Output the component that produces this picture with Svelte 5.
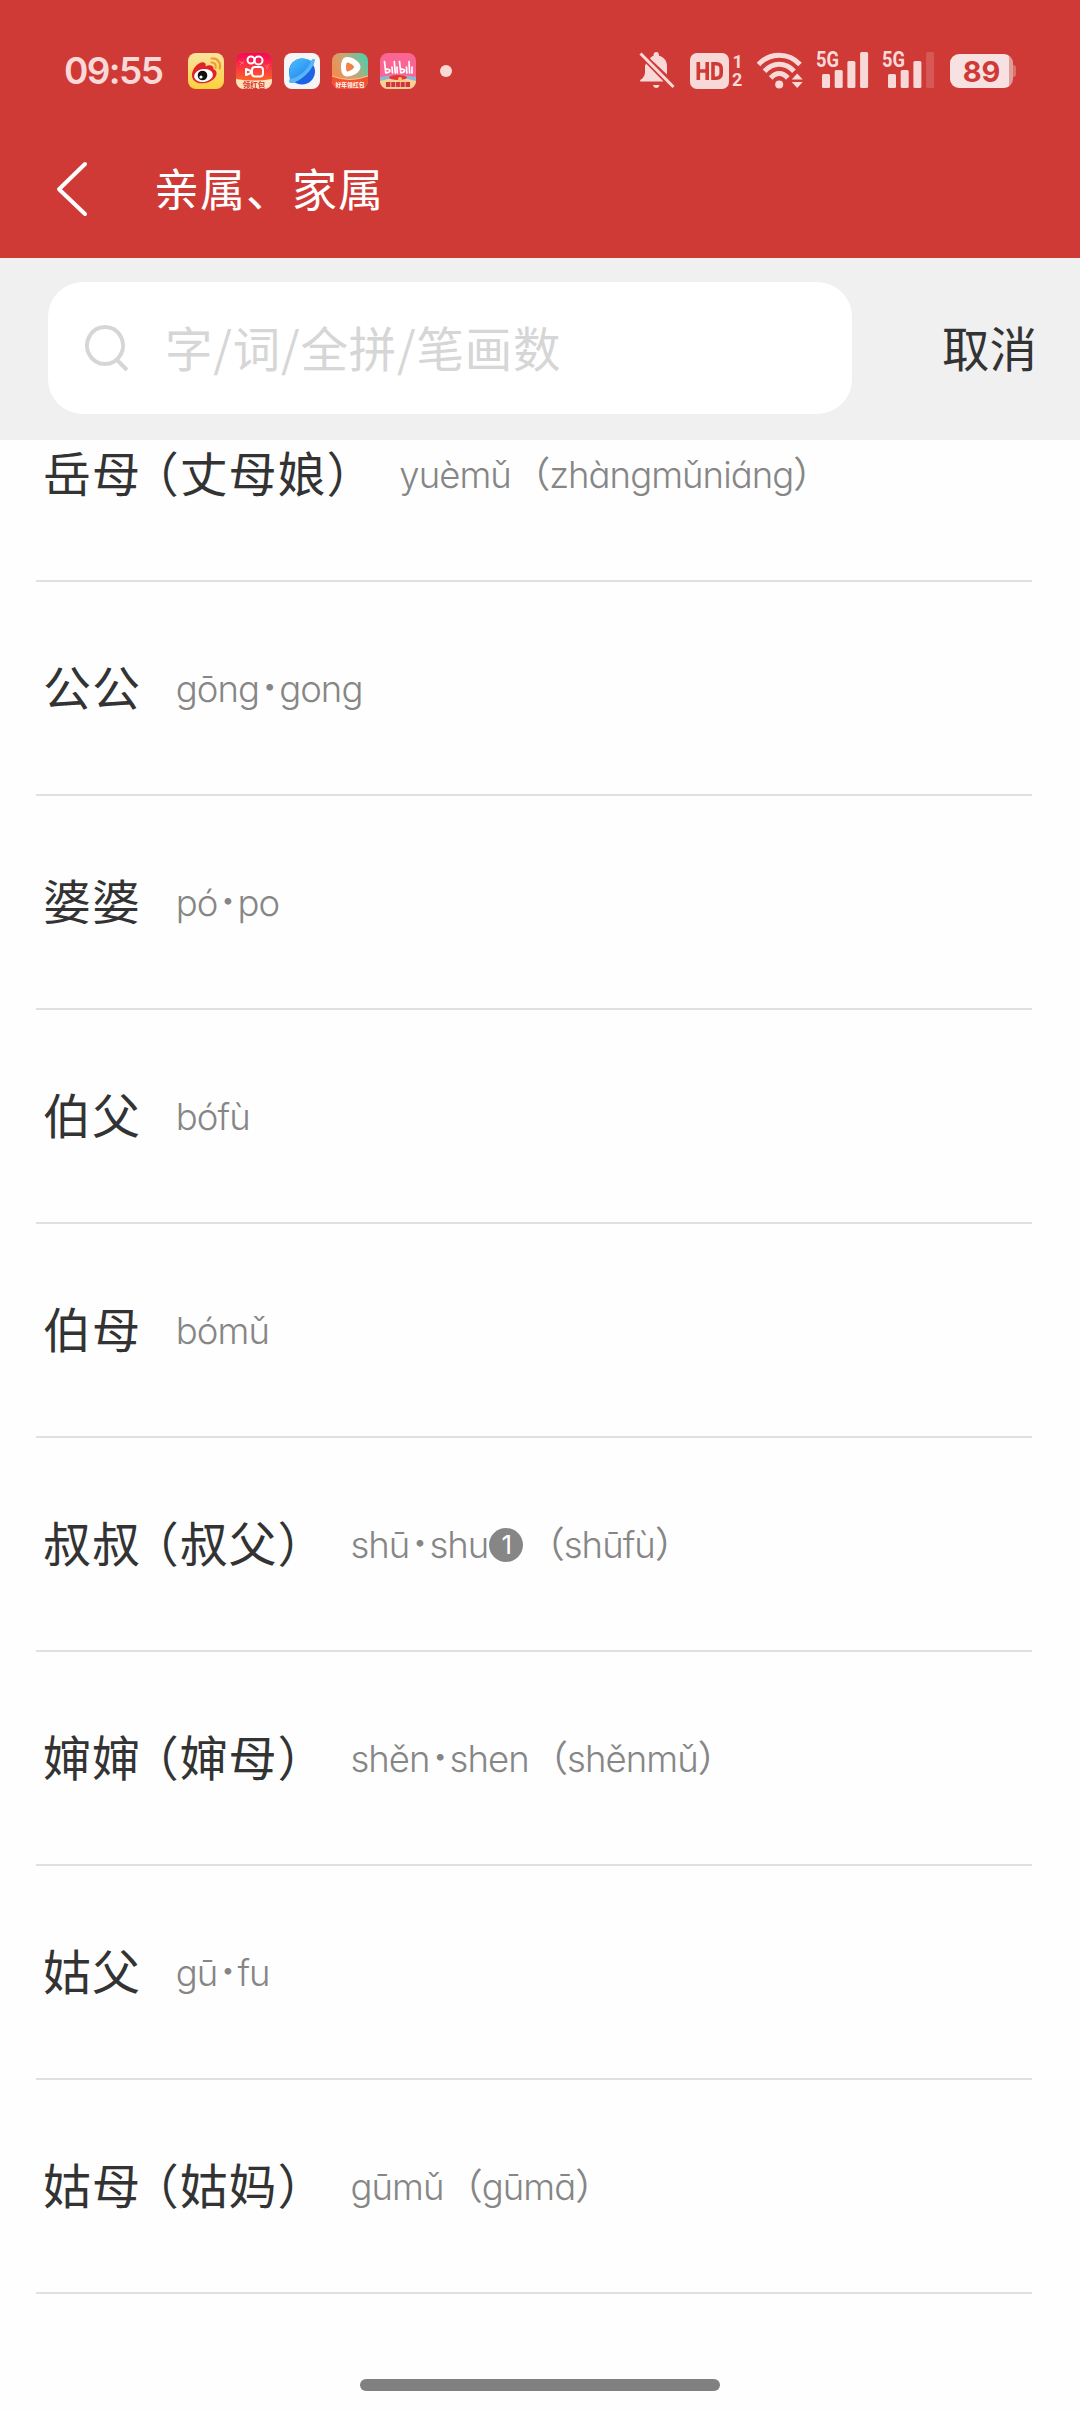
<script>
    const entries = [
        { word: '岳母（丈母娘）', pinyin: 'yuèmǔ（zhàngmǔniáng）' },
        { word: '公公', pinyin: 'gōng·gong' },
        { word: '婆婆', pinyin: 'pó·po' },
        { word: '伯父', pinyin: 'bófù' },
        { word: '伯母', pinyin: 'bómǔ' },
        { word: '叔叔（叔父）', pinyin: 'shū·shu①（shūfù）' },
        { word: '婶婶（婶母）', pinyin: 'shěn·shen（shěnmǔ）' },
        { word: '姑父', pinyin: 'gū·fu' },
        { word: '姑母（姑妈）', pinyin: 'gūmǔ（gūmā）' }
    ];

    const kinds = { '（': 'open', '）': 'close', '·': 'dot', '①': 'sense' };

    // Split off brackets, neutral tone dots and sense numbers so they can be spaced on their own
    function split(text) {
        return text
            .split(/([（）·①])/)
            .filter(Boolean)
            .map((part) => ({ kind: kinds[part] || 'plain', text: part === '①' ? '1' : part }));
    }
</script>

<div class="screen">
    <header>
        <div class="status">
            <span class="time">09:55</span>
            <div class="apps">
                <svg width="36" height="36" viewBox="0 0 36 36">
                    <defs>
                        <linearGradient id="weibo" x1="0" y1="0" x2="0" y2="1">
                            <stop offset="0" stop-color="#fbe3a2" />
                            <stop offset="1" stop-color="#fdd03c" />
                        </linearGradient>
                    </defs>
                    <rect width="36" height="36" rx="8" fill="url(#weibo)" />
                    <path d="M4 21C5 14 12 8 16 9.500C18 10 18 12 17.500 13.500C21 11.500 26 12 25.500 16C29 17.500 29.500 21 27 24.500C23 30 14 31.500 9 29.500C5.500 28 3.600 25 4 21Z" fill="#e0222b" />
                    <ellipse cx="15.500" cy="22.500" rx="9.500" ry="6.500" fill="#fff" transform="rotate(-8 15.500 22.500)" />
                    <circle cx="14.500" cy="22.500" r="4.800" fill="#111" />
                    <circle cx="13" cy="24" r="1.600" fill="#fff" />
                    <path d="M23.500 9.500c3-.2 5 2.500 4.200 5.200M23.500 5.500c6-.6 10 4.500 8 10" fill="none" stroke="#f29a2e" stroke-width="2.200" stroke-linecap="round" />
                </svg>
                <svg width="36" height="36" viewBox="0 0 36 36">
                    <defs>
                        <linearGradient id="kuai" x1="0" y1="0" x2="0" y2="1">
                            <stop offset="0" stop-color="#f5065b" />
                            <stop offset=".7" stop-color="#fd5a2c" />
                            <stop offset="1" stop-color="#ff7c36" />
                        </linearGradient>
                        <clipPath id="tile"><rect width="36" height="36" rx="8" /></clipPath>
                    </defs>
                    <g clip-path="url(#tile)">
                        <rect width="36" height="36" fill="url(#kuai)" />
                        <path d="M0 26Q18 29 36 26V36H0Z" fill="#fde3c0" />
                        <g fill="none" stroke="#fff" stroke-width="2">
                            <circle cx="15" cy="7" r="3.500" />
                            <circle cx="22.500" cy="7.500" r="4" />
                            <rect x="16" y="14" width="11" height="9.500" rx="3" />
                            <path d="M10 16v6l5-2v-2Z" stroke-linejoin="round" />
                        </g>
                        <path d="M3 8l5 3M4 12l4-4M29 12l4 3M33 11l-3 5" stroke="#ff6a6a" stroke-width="1" />
                        <text class="tiny" x="18" y="34.500" font-size="7.500" fill="#d8332d">领红包</text>
                    </g>
                </svg>
                <svg width="36" height="36" viewBox="0 0 36 36">
                    <defs>
                        <linearGradient id="planet" x1="0" y1="0" x2=".8" y2="1">
                            <stop offset=".1" stop-color="#46bdf9" />
                            <stop offset=".6" stop-color="#2f95f5" />
                        </linearGradient>
                    </defs>
                    <rect width="36" height="36" rx="8" fill="#f5f5f7" />
                    <circle cx="18" cy="18.500" r="13" fill="#1d63e8" />
                    <path d="M6 26C3.500 17 7 6 17.500 5.500C22 5.300 25 6.500 27 8C29 5.500 31 5 30.500 8C29 17 16 29 7.500 30C5 30.200 5 28.500 6 26Z" fill="url(#planet)" />
                    <path d="M27 8c2-2.500 4-3 3.500 0C29 17 16 29 7.500 30c-2.500.2-2.500-1.500-1.500-4 8-1 19-10 21-18Z" fill="#57b6f8" />
                </svg>
                <svg width="36" height="36" viewBox="0 0 36 36">
                    <defs>
                        <linearGradient id="video" x1="0" y1=".6" x2="1" y2="0">
                            <stop offset="0" stop-color="#f78a4a" />
                            <stop offset=".45" stop-color="#c9a575" />
                            <stop offset="1" stop-color="#35d6b5" />
                        </linearGradient>
                    </defs>
                    <g clip-path="url(#tile)">
                        <rect width="36" height="36" fill="url(#video)" />
                        <path d="M0 23Q18 30 36 23V36H0Z" fill="#f4502f" />
                        <path d="M0 23Q18 30 36 23" fill="none" stroke="#ffc48c" stroke-width="1" />
                        <path d="M15 4C21 4 28.500 9 28.500 14S21 23.500 15 23.500C10.500 23.500 9 19 9 14S10.500 4 15 4Z" fill="#fff" />
                        <path d="M16 9.500c3 1 6 3 6 4.500s-3 3.500-6 4.500c-1.500.3-2-1-2-4.500s.5-4.800 2-4.500Z" fill="#f08347" />
                        <text class="tiny" x="18" y="34" font-size="5.800" fill="#fff">好年领红包</text>
                    </g>
                </svg>
                <svg width="36" height="36" viewBox="0 0 36 36">
                    <g clip-path="url(#tile)">
                        <rect width="36" height="36" fill="#fb6593" />
                        <path d="M0 24Q18 20 36 24V30H0Z" fill="#8cb8d8" />
                        <path d="M0 28Q18 22 36 28V36H0Z" fill="#fbcf8d" />
                        <ellipse cx="18" cy="24.500" rx="9" ry="2.500" fill="#e5343f" />
                        <circle cx="20" cy="26" r="2" fill="#fbc558" />
                        <g fill="none" stroke="#fff" stroke-width="1.700" stroke-linecap="round">
                            <path d="M4.500 8.500L5.800 20M5.800 20c5.500-.6 5.500-4.500 0-3.800M12 14l.5 6M14.300 8.500l1 11.500M17 14l.3 6M19.500 8.500l1.300 11.500M20.800 20c5-.6 5-4.500 0-3.800M26.500 14l.3 6M29 8.500l.6 11.500M32 14v6" />
                        </g>
                        <path d="M6 29h24v5H6Z" fill="#cf3348" />
                        <path d="M10.800 29v5M15.600 29v5M20.400 29v5M25.200 29v5" stroke="#fbcf8d" stroke-width=".8" />
                    </g>
                </svg>
                <i class="more"></i>
            </div>

            <div class="system">
                <svg class="bell" width="36" height="37" viewBox="0 0 36 37">
                    <path d="M7 11.500L24.500 29.500H1.200V28C4 26.500 5.500 24 6 21V14Z" />
                    <path d="M11 6.500C12 5 13 4.300 14.500 3.800C14.500 1.200 15.500 0 17.300 0S20 1.200 20 3.800C25 5 28 9 28 14V22.500Z" />
                    <path d="M14 33h6.500c-.5 2-1.500 3-3.200 3s-2.800-1-3.300-3Z" />
                    <path d="M1.500 1.500L34.500 35" fill="none" stroke="#f8d9d8" stroke-width="3" />
                </svg>
                <svg class="hd" width="53" height="36" viewBox="0 0 53 36">
                    <rect width="39" height="36" rx="7" />
                    <path d="M8.300 9v18M17.200 9v18M8.300 18h9M23 10.700v14.600h3.200q5-.2 5-5v-4.600q0-4.800-5-5Z" fill="none" stroke="#cf3a36" stroke-width="3.600" />
                    <text x="42.500" y="15" font-size="18">1</text>
                    <text x="42" y="33" font-size="18">2</text>
                </svg>
                <svg class="wifi" width="46" height="37" viewBox="0 0 46 37">
                    <g fill="none" stroke="#f8d9d8" stroke-width="5">
                        <path d="M1.500 12.500C13 .2 31.500.2 43 12.500" />
                        <path d="M7.500 19.200C16 10 28.500 10 37 19.200" />
                        <path d="M13.700 26C19 20 25.500 20 30.800 26" />
                    </g>
                    <circle cx="22.200" cy="32.500" r="4" />
                    <path d="M40.200 21.500l5.500 6H34.700ZM40.200 36l5.500-6H34.700Z" />
                </svg>
                {#each [4, 3] as level}
                    <svg class="signal" width="53" height="38" viewBox="0 0 53 38">
                        <text x="0" y="16" font-size="22" textLength="23" lengthAdjust="spacingAndGlyphs">5G</text>
                        {#each [14, 18, 27, 36] as height, i}
                            <rect x={6 + i * 12.7} y={37 - height} width="8" {height} rx="1.500" opacity={i < level ? 1 : 0.2} />
                        {/each}
                    </svg>
                {/each}
                <div class="battery"><span>89</span></div>
            </div>
        </div>

        <div class="title">
            <svg width="32" height="56" viewBox="0 0 32 56">
                <path d="M29 3L3 28.200L29 53" fill="none" stroke="#fff" stroke-width="4" stroke-linecap="round" stroke-linejoin="round" />
            </svg>
            <h1>亲属、家属</h1>
        </div>
    </header>

    <div class="search">
        <div class="field">
            <svg width="44" height="47" viewBox="0 0 44 47">
                <path d="M20 2a18 18.500 0 1 0 .01 0ZM32.500 35.500L42 45" fill="none" stroke="#d6d6d6" stroke-width="4" />
            </svg>
            <span class="placeholder">字/词/全拼/笔画数</span>
        </div>
        <span class="cancel">取消</span>
    </div>

    <main>
        <ul>
            {#each entries as entry}
                <li>
                    <span class="word">{#each split(entry.word) as part}<span class={part.kind}>{part.text}</span>{/each}</span>
                    <span class="pinyin">{#each split(entry.pinyin) as part}<span class={part.kind}>{part.text}</span>{/each}</span>
                </li>
            {/each}
        </ul>
    </main>

    <footer><div class="handle"></div></footer>
</div>

<style>
    :global(body) {
        margin: 0;
        background: #fefefe;
    }

    .screen {
        width: 1080px;
        height: 2412px;
        display: flex;
        flex-direction: column;
        overflow: hidden;
        background: #fefefe;
        font-family: 'Noto Sans CJK SC', sans-serif;
        color: #333;
        white-space: nowrap;
    }

    header {
        height: 258px;
        flex: none;
        background: #cf3a36;
    }

    .status {
        display: flex;
        align-items: center;
        height: 142px;
        padding: 0 67px 0 64px;
        color: #f8d9d8;
        fill: #f8d9d8;
        box-sizing: border-box;
    }

    svg {
        display: block;
        flex: none;
        overflow: visible;
    }

    svg text {
        font-family: Roboto, sans-serif;
        font-weight: 700;
    }

    svg .tiny {
        font-family: 'Noto Sans CJK SC', sans-serif;
        text-anchor: middle;
    }

    .time {
        width: 124px;
        font-family: Inter, sans-serif;
        font-size: 37px;
        font-weight: 600;
        line-height: 44px;
        letter-spacing: -1.6px;
    }

    .apps {
        display: flex;
        align-items: center;
        gap: 12px;
    }

    .more {
        width: 12px;
        height: 12px;
        margin-left: 12px;
        border-radius: 50%;
        background: #f8d9d8;
    }

    .system {
        display: flex;
        align-items: center;
        margin-left: auto;
    }

    .bell {
        margin-bottom: 1px;
    }

    .hd {
        margin-left: 15px;
        margin-bottom: 1px;
    }

    .wifi {
        margin-left: 14px;
        margin-bottom: 1px;
    }

    .signal {
        margin-left: 13px;
        margin-bottom: 2px;
    }

    .battery {
        position: relative;
        width: 63px;
        height: 34px;
        margin-left: 15px;
        border-radius: 9px;
        background: linear-gradient(90deg, #f8e2e1 59px, #e09e9b 59px);
        color: #cf3a36;
        font: 700 29px/35px Inter, sans-serif;
        text-align: center;
    }

    .battery::after {
        content: '';
        position: absolute;
        right: -3px;
        top: 11px;
        width: 3px;
        height: 12px;
        border-radius: 0 4px 4px 0;
        background: #d9726f;
    }

    .title {
        display: flex;
        align-items: center;
        height: 94px;
        padding-left: 56px;
    }

    h1 {
        margin: -2px 0 0 66px;
        color: #fff;
        font-size: 45px;
        font-weight: 400;
        line-height: 60px;
        letter-spacing: 1px;
    }

    .search {
        display: flex;
        align-items: center;
        height: 182px;
        flex: none;
        padding: 0 43px 0 48px;
        box-sizing: border-box;
        background: #f0f0f0;
        font-size: 47.5px;
        line-height: 60px;
    }

    .field {
        display: flex;
        align-items: center;
        width: 804px;
        height: 132px;
        margin-top: -2px;
        border-radius: 35px;
        background: #fff;
        color: #d6d6d6;
    }

    .field svg {
        margin-left: 37px;
    }

    .placeholder {
        margin: -2px 0 0 36px;
        letter-spacing: 0.8px;
    }

    .cancel {
        margin: -4px 0 0 auto;
    }

    main {
        flex: 1;
        overflow: hidden;
    }

    ul {
        margin: -72px 48px 0 36px;
        padding: 0;
        list-style: none;
    }

    li {
        display: flex;
        align-items: center;
        height: 212px;
        padding-left: 7px;
        border-bottom: 2px solid #e0e0e0;
    }

    .word {
        margin-top: -7px;
        font-size: 48px;
        letter-spacing: 0.9px;
        line-height: 1;
    }

    /* Half-width brackets with their own side gap */
    .open,
    .close {
        font-family: 'Noto Sans CJK SC', sans-serif;
        font-feature-settings: 'halt';
        font-weight: 400;
        line-height: 1;
    }

    .word .open {
        margin-left: 14px;
    }

    .word .close {
        margin-right: 13px;
    }

    .pinyin {
        margin: 2px 0 0 35px;
        color: #868686;
        font-family: Inter, 'Noto Sans CJK SC', sans-serif;
        font-size: 36.5px;
        font-weight: 350;
        font-feature-settings: 'cv11';
        letter-spacing: -0.95px;
        line-height: 70px;
    }

    .pinyin .open {
        margin-left: 21px;
    }

    .pinyin .dot {
        display: inline-block;
        width: 20px;
        text-align: center;
        font-weight: 800;
        line-height: 1;
        vertical-align: 2px;
    }

    .sense {
        display: inline-block;
        width: 34px;
        height: 34px;
        margin: 0 2px 0 1px;
        border-radius: 50%;
        background: #868686;
        color: #fff;
        font-size: 26px;
        font-weight: 400;
        line-height: 34px;
        text-align: center;
        vertical-align: 4px;
    }

    footer {
        height: 33px;
        flex: none;
        display: flex;
        justify-content: center;
    }

    .handle {
        width: 360px;
        height: 12px;
        border-radius: 6px;
        background: #808080;
    }
</style>
